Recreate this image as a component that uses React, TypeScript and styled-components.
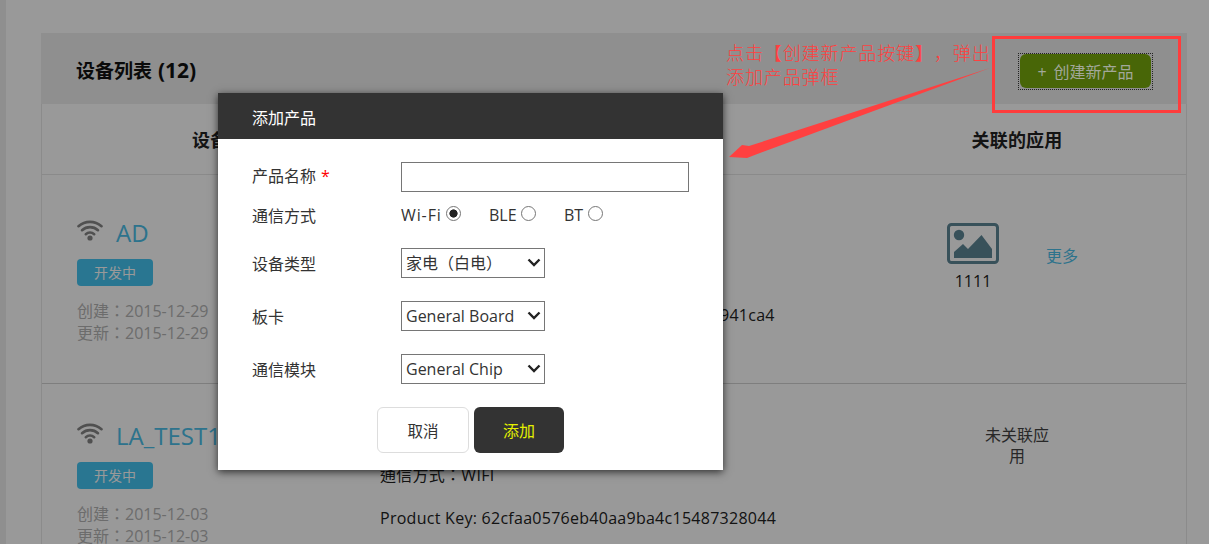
import React from "react";
import styled, { createGlobalStyle } from "styled-components";

const FONT = `"Open Sans", "Noto Sans CJK SC", sans-serif`;
const FONT_TC = `"Open Sans", "Noto Sans CJK TC", sans-serif`;

const Global = createGlobalStyle`
  html, body { margin: 0; padding: 0; background: #fff; }
  body { font-family: ${FONT}; width: 1209px; height: 544px; overflow: hidden; text-spacing-trim: space-all; }
  * { box-sizing: border-box; }
`;

const Viewport = styled.div`
  position: relative;
  width: 1209px;
  height: 544px;
  overflow: hidden;
`;

const Page = styled.main`
  height: 544px;
  padding: 33px 22px 0 35px;
  border-left: 6px solid #eee;
  overflow: hidden;
`;

const Panel = styled.section`
  width: 1146px;
  border-right: 1px solid #e8e8e8;
  border-left: 1px solid #e8e8e8;
`;

const PanelHead = styled.header`
  height: 71px;
  background: #eeeeee;
  margin: 0 -1px;
  padding: 2px 0 0 35px;
  display: flex;
  align-items: center;
`;

const PanelTitle = styled.h2`
  margin: 0;
  font-size: 19px;
  font-weight: 700;
  color: #111;
`;

const TitleCount = styled.span`
  font-size: 21px;
  margin-left: 1px;
`;

const ColumnHead = styled.div`
  height: 71px;
  display: grid;
  grid-template-columns: 373px 432px 340px;
  align-items: center;
  border-bottom: 1px solid #e6e6e6;
`;

const ColumnTitle = styled.div`
  text-align: center;
  font-size: 18px;
  letter-spacing: 0.2px;
  font-weight: 700;
  color: #222;
`;

const Row = styled.div<{ $h: number; $top: number }>`
  height: ${(p) => p.$h}px;
  display: grid;
  grid-template-columns: 338px 466px 341px;
  border-bottom: 1px solid #d2d2d2;
  padding-top: ${(p) => p.$top}px;
`;

const DeviceCell = styled.div`
  padding-left: 35px;
`;

const NameLine = styled.div`
  display: flex;
  align-items: flex-start;
  gap: 14px;
  height: 42px;
  margin-top: -2px;
`;

const WifiSvg = styled.svg`
  width: 26px;
  height: 22px;
  flex: none;
  margin-top: 2px;
  color: #858585;
`;

const DeviceName = styled.a`
  color: #4bc0ea;
  font-size: 24px;
  line-height: 30px;
  margin-top: 1px;
  margin-left: -1px;
`;

const Badge = styled.span`
  display: block;
  width: 76px;
  height: 27px;
  border-radius: 4px;
  background: #45c5f2;
  color: #fff;
  font-size: 14px;
  line-height: 27px;
  text-align: center;
`;

const Dates = styled.div`
  margin-top: 14px;
`;

const DateLine = styled.div`
  font-family: ${FONT_TC};
  color: #b5b5b5;
  font-size: 16px;
  line-height: 22px;
`;

const InfoCell = styled.div<{ $top: number }>`
  padding-top: ${(p) => p.$top}px;
`;

const InfoLine = styled.div`
  font-family: ${FONT_TC};
  font-size: 16px;
  line-height: 24px;
  letter-spacing: 0.27px;
  color: #222;
  margin-bottom: 19px;
`;

const AppCell = styled.div<{ $top: number }>`
  padding-top: ${(p) => p.$top}px;
  display: flex;
  align-items: flex-start;
  padding-left: 100px;
`;

const AppItem = styled.div`
  width: 52px;
  margin-left: 1px;
  display: flex;
  flex-direction: column;
  align-items: center;
  gap: 6px;
  color: #222;
  font-size: 16px;
  line-height: 22px;
`;

const MoreLink = styled.a`
  color: #4bc0ea;
  font-size: 16px;
  margin-left: 47px;
  margin-top: 20px;
`;

const NoApp = styled.div`
  width: 70px;
  margin-left: 36px;
  text-align: center;
  font-size: 16px;
  line-height: 21px;
  color: #444;
`;

const Dim = styled.div`
  position: absolute;
  inset: 0;
  background: rgba(0, 0, 0, 0.4);
`;

const Modal = styled.div`
  position: absolute;
  left: 218px;
  top: 93px;
  width: 505px;
  height: 377px;
  background: #fff;
  box-shadow: 0 2px 8px rgba(0, 0, 0, 0.7);
`;

const ModalHead = styled.div`
  height: 46px;
  background: #333;
  color: #fff;
  font-size: 16px;
  line-height: 50px;
  padding-left: 34px;
`;

const ModalBody = styled.form`
  padding: 23px 34px 0;
  display: flex;
  flex-direction: column;
`;

const FormRow = styled.div<{ $mt: number; $h: number }>`
  margin-top: ${(p) => p.$mt}px;
  height: ${(p) => p.$h}px;
  display: flex;
  align-items: center;
`;

const Label = styled.label<{ $raise?: number }>`
  width: 149px;
  font-size: 16px;
  color: #333;
  flex: none;
  margin-top: ${(p) => -(p.$raise ?? 0)}px;
`;

const Required = styled.span`
  color: #f00;
  margin-left: 5px;
`;

const TextInput = styled.input`
  width: 288px;
  height: 30px;
  border: 1px solid #767676;
  outline: none;
  background: #fff;
`;

const RadioItem = styled.label<{ $w: number; $track?: number; $gap?: number }>`
  width: ${(p) => p.$w}px;
  display: flex;
  align-items: center;
  font-size: 16px;
  color: #333;
  letter-spacing: ${(p) => p.$track ?? 0}px;
  gap: ${(p) => p.$gap ?? 4}px;
`;

const Radio = styled.input`
  appearance: none;
  width: 15px;
  height: 15px;
  margin: -3px 0 0;
  border: 1px solid #767676;
  border-radius: 50%;
  background: #fff;
  &:checked { background: radial-gradient(circle, #222 0 3.8px, #fff 4.4px); }
`;

const SelectWrap = styled.div`
  position: relative;
  width: 144px;
  height: 30px;
`;

const Select = styled.select`
  appearance: none;
  width: 100%;
  height: 100%;
  border: 1px solid #767676;
  border-radius: 0;
  background: #fff;
  padding: 0 0 0 4px;
  font: 16px ${FONT_TC};
  color: #333;
  outline: none;
`;

const Chevron = styled.svg`
  position: absolute;
  right: 4px;
  top: 10px;
  width: 14px;
  height: 9px;
  pointer-events: none;
`;

const Actions = styled.div`
  margin-top: 23px;
  margin-left: 125px;
  display: flex;
  gap: 5px;
`;

const CancelButton = styled.button`
  width: 92px;
  height: 46px;
  border: 1px solid #ddd;
  border-radius: 6px;
  background: #fff;
  color: #333;
  font: 15.5px ${FONT};
`;

const AddButton = styled.button`
  width: 90px;
  height: 46px;
  border: 0;
  border-radius: 6px;
  background: #333;
  color: #e4f000;
  font: 16px ${FONT};
`;

const CreateButton = styled.div`
  position: absolute;
  left: 1018px;
  top: 53px;
  width: 135px;
  height: 37px;
  border: 1px dotted #222;
  padding: 0 1px 1px;
`;

const CreateInner = styled.div`
  height: 100%;
  border-radius: 6px;
  background: #486607;
  color: #a2a89a;
  font-size: 16px;
  line-height: 36px;
  text-align: center;
`;

const Plus = styled.span`
  margin-right: 7px;
`;

const Note = styled.div`
  position: absolute;
  left: 726px;
  top: 41px;
  width: 270px;
  font-size: 18px;
  line-height: 24px;
  letter-spacing: 0.9px;
  font-weight: 300;
  color: #ff4040;
`;

const RedBox = styled.div`
  position: absolute;
  left: 992px;
  top: 36px;
  width: 189px;
  height: 77px;
  border: 3px solid #ff3c3c;
`;

const ArrowSvg = styled.svg`
  position: absolute;
  left: 720px;
  top: 60px;
  width: 280px;
  height: 110px;
`;

const WifiIcon = () => (
  <WifiSvg viewBox="0 0 26 22">
    <g fill="none" stroke="currentColor" strokeWidth="2.6" strokeLinecap="round">
      <path d="M1.5 7.2A17.4 17.4 0 0 1 24.5 7.2" />
      <path d="M5 11.2A12 12 0 0 1 21 11.2" />
      <path d="M8.8 15.2A6.4 6.4 0 0 1 17.2 15.2" />
    </g>
    <circle cx="13" cy="19" r="2.6" fill="currentColor" />
  </WifiSvg>
);

const ImgIcon = () => (
  <svg width="52" height="41" viewBox="0 0 52 41">
    <rect x="1.5" y="1.5" width="49" height="38" rx="3" fill="#fff" stroke="#5e8797" strokeWidth="3" />
    <circle cx="12" cy="12" r="5.2" fill="#5e8797" />
    <path d="M7 35V29L16 21 21 26 34.5 12 45 26V35z" fill="#5e8797" />
  </svg>
);

const Caret = () => (
  <Chevron viewBox="0 0 14 9">
    <path d="M1.5 1.5 7 7l5.5-5.5" fill="none" stroke="#222" strokeWidth="2.4" />
  </Chevron>
);

export default function App() {
  return (
    <Viewport>
      <Global />
      <Page>
        <Panel>
          <PanelHead>
            <PanelTitle>
              设备列表 <TitleCount>(12)</TitleCount>
            </PanelTitle>
          </PanelHead>
          <ColumnHead>
            <ColumnTitle>设备信息</ColumnTitle>
            <ColumnTitle>产品信息</ColumnTitle>
            <ColumnTitle>关联的应用</ColumnTitle>
          </ColumnHead>
          <Row $h={209} $top={44}>
            <DeviceCell>
              <NameLine>
                <WifiIcon />
                <DeviceName>AD</DeviceName>
              </NameLine>
              <Badge>开发中</Badge>
              <Dates>
                <DateLine>创建：2015-12-29</DateLine>
                <DateLine>更新：2015-12-29</DateLine>
              </Dates>
            </DeviceCell>
            <InfoCell $top={41}>
              <InfoLine>通信方式：WIFI</InfoLine>
              <InfoLine>Product Key: 2f0e1d7c9a5b48e6b3c71ad05c941ca4</InfoLine>
            </InfoCell>
            <AppCell $top={4}>
              <AppItem>
                <ImgIcon />
                1111
              </AppItem>
              <MoreLink>更多</MoreLink>
            </AppCell>
          </Row>
          <Row $h={208} $top={38}>
            <DeviceCell>
              <NameLine>
                <WifiIcon />
                <DeviceName>LA_TEST1</DeviceName>
              </NameLine>
              <Badge>开发中</Badge>
              <Dates>
                <DateLine>创建：2015-12-03</DateLine>
                <DateLine>更新：2015-12-03</DateLine>
              </Dates>
            </DeviceCell>
            <InfoCell $top={41}>
              <InfoLine>通信方式：WIFI</InfoLine>
              <InfoLine>Product Key: 62cfaa0576eb40aa9ba4c15487328044</InfoLine>
            </InfoCell>
            <AppCell $top={3}>
              <NoApp>未关联应用</NoApp>
            </AppCell>
          </Row>
        </Panel>
      </Page>
      <Dim />
      <Modal>
        <ModalHead>添加产品</ModalHead>
        <ModalBody>
          <FormRow $mt={0} $h={30}>
            <Label $raise={4}>
              产品名称<Required>*</Required>
            </Label>
            <TextInput />
          </FormRow>
          <FormRow $mt={8} $h={30}>
            <Label>通信方式</Label>
            <RadioItem $w={88} $track={0.9}>
              Wi-Fi
              <Radio type="radio" name="c" defaultChecked />
            </RadioItem>
            <RadioItem $w={75}>
              BLE
              <Radio type="radio" name="c" />
            </RadioItem>
            <RadioItem $w={60} $gap={5}>
              BT
              <Radio type="radio" name="c" />
            </RadioItem>
          </FormRow>
          <FormRow $mt={18} $h={30}>
            <Label>设备类型</Label>
            <SelectWrap>
              <Select defaultValue="a">
                <option value="a">家电（白电）</option>
              </Select>
              <Caret />
            </SelectWrap>
          </FormRow>
          <FormRow $mt={23} $h={30}>
            <Label>板卡</Label>
            <SelectWrap>
              <Select defaultValue="a">
                <option value="a">General Board</option>
              </Select>
              <Caret />
            </SelectWrap>
          </FormRow>
          <FormRow $mt={23} $h={30}>
            <Label>通信模块</Label>
            <SelectWrap>
              <Select defaultValue="a">
                <option value="a">General Chip</option>
              </Select>
              <Caret />
            </SelectWrap>
          </FormRow>
          <Actions>
            <CancelButton type="button">取消</CancelButton>
            <AddButton type="button">添加</AddButton>
          </Actions>
        </ModalBody>
      </Modal>
      <CreateButton>
        <CreateInner>
          <Plus>+</Plus>创建新产品
        </CreateInner>
      </CreateButton>
      <Note>
        点击【创建新产品按键】，弹出
        <br />
        添加产品弹框
      </Note>
      <RedBox />
      <ArrowSvg viewBox="0 0 280 110">
        <path d="M270 8 L29 86 L22 85 L9 97 L27 98 L36 94.5 Z" fill="#ff4040" />
      </ArrowSvg>
    </Viewport>
  );
}
